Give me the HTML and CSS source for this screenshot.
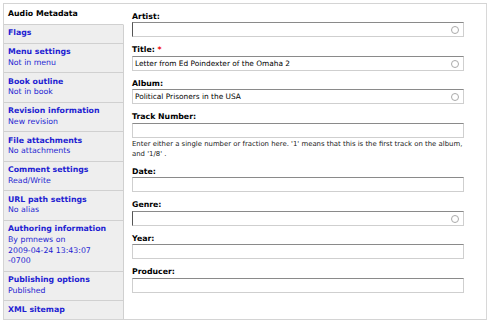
FILE: index.html
```html
<!DOCTYPE html>
<html lang="en">
<head>
  <meta charset="UTF-8">
  <title>Audio Metadata</title>
  <link rel="stylesheet" href="styles.css">
</head>
<body>

  <div class="tabs-wrap">
    <ul class="tab-list">
      <li class="tab selected"><strong>Audio Metadata</strong></li>
      <li class="tab"><strong>Flags</strong></li>
      <li class="tab"><strong>Menu settings</strong><span>Not in menu</span></li>
      <li class="tab"><strong>Book outline</strong><span>Not in book</span></li>
      <li class="tab"><strong>Revision information</strong><span>New revision</span></li>
      <li class="tab"><strong>File attachments</strong><span>No attachments</span></li>
      <li class="tab"><strong>Comment settings</strong><span>Read/Write</span></li>
      <li class="tab"><strong>URL path settings</strong><span>No alias</span></li>
      <li class="tab"><strong>Authoring information</strong><span>By pmnews on<br>2009-04-24 13:43:07<br>-0700</span></li>
      <li class="tab"><strong>Publishing options</strong><span>Published</span></li>
      <li class="tab"><strong>XML sitemap</strong></li>
    </ul>

    <div class="pane">
      <div class="field">
        <label for="artist">Artist:</label>
        <div class="auto">
          <input type="text" id="artist" class="caret">
          <span class="throbber"></span>
        </div>
      </div>

      <div class="field">
        <label for="title">Title: <em class="req">*</em></label>
        <div class="auto">
          <input type="text" id="title" value="Letter from Ed Poindexter of the Omaha 2">
          <span class="throbber"></span>
        </div>
      </div>

      <div class="field">
        <label for="album">Album:</label>
        <div class="auto">
          <input type="text" id="album" value="Political Prisoners in the USA">
          <span class="throbber"></span>
        </div>
      </div>

      <div class="field">
        <label for="track">Track Number:</label>
        <input type="text" id="track">
        <div class="desc">Enter either a single number or fraction here. '1' means that this is the first track on the album, and '1/8' .</div>
      </div>

      <div class="field">
        <label for="date">Date:</label>
        <input type="text" id="date">
      </div>

      <div class="field">
        <label for="genre">Genre:</label>
        <div class="auto">
          <input type="text" id="genre" class="caret">
          <span class="throbber"></span>
        </div>
      </div>

      <div class="field">
        <label for="year">Year:</label>
        <input type="text" id="year">
      </div>

      <div class="field">
        <label for="producer">Producer:</label>
        <input type="text" id="producer">
      </div>
    </div>
  </div>

</body>
</html>
```

FILE: styles.css
```css
body { margin: 3px 0 0 3px; font-family: "DejaVu Sans", Verdana, sans-serif; background: #fff; color: #000; }
.tabs-wrap { display: flex; width: 484px; box-sizing: border-box; border: 1px solid #d4d4d4; border-right-color: #d8d8d8; }

.tab-list { list-style: none; margin: 0; padding: 0; width: 120px; flex: none; background: #eee; }
.tab { padding: 3.5px 4px; border-bottom: 1px solid #d0d0d0; border-right: 1px solid #d0d0d0; font-size: 7.8px; line-height: 10.75px; color: #1e1ed2; }
.tab strong, .tab span { display: block; }
.tab:last-child { border-bottom: none; }
.tab.selected { background: #fff; border-right-color: #fff; color: #000; padding: 4.5px 4px; }

.pane { flex: 1; padding: 6.5px 0 0 8px; }
.field { margin-bottom: 7px; }
.field label { display: block; font-size: 7.8px; font-weight: bold; line-height: 11.5px; }
.req { color: #e00; font-style: normal; }

.field input {
  display: block; width: 332px; height: 15px; box-sizing: border-box; margin: 0;
  padding: 0 2px; border: 1px solid #cfcfcf; border-top-color: #8a8a8a;
  font-family: "DejaVu Sans", Verdana, sans-serif; font-size: 7.4px; color: #000; background: #fff;
}
.field input.caret { border-left-color: #555; }

.auto { position: relative; width: 332px; }
.throbber { position: absolute; right: 5px; top: 4px; width: 6px; height: 6px; border: 1px solid #aaa; border-radius: 50%; }

.desc { font-size: 6.9px; line-height: 10px; color: #222; margin-top: 1px; width: 340px; }
```
